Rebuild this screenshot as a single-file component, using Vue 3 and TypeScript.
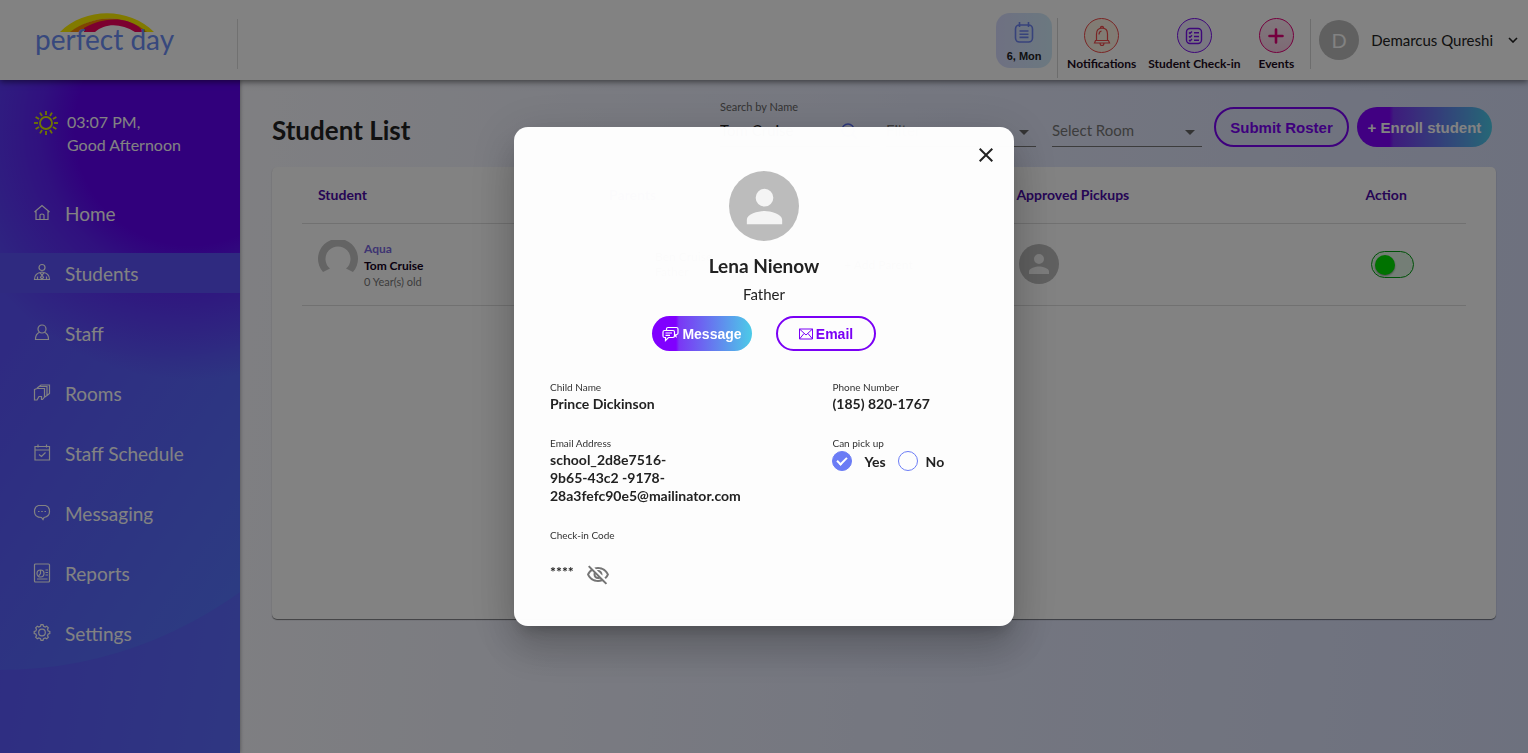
<script setup lang="ts">
import { ref } from 'vue'

interface NavItem {
  label: string
  icon: string
}

const navItems: NavItem[] = [
  { label: 'Home', icon: 'home' },
  { label: 'Students', icon: 'students' },
  { label: 'Staff', icon: 'staff' },
  { label: 'Rooms', icon: 'rooms' },
  { label: 'Staff Schedule', icon: 'schedule' },
  { label: 'Messaging', icon: 'messaging' },
  { label: 'Reports', icon: 'reports' },
  { label: 'Settings', icon: 'settings' },
]

const activeItem = ref('Students')
const search = ref('Tom Cruise')
const canPickUp = ref('yes')
const emailLines: string[] = ['school_2d8e7516-', '9b65-43c2 -9178-', '28a3fefc90e5@mailinator.com']
const sunRays: number[] = Array.from({ length: 12 }, (_, i) => i * 30)
</script>

<template>
  <div class="app">
    <header class="topbar">
      <a class="logo" href="#" aria-label="perfect day">
        <svg class="rainbow" viewBox="0 0 96 20" aria-hidden="true">
          <path d="M1 20C26-5 70-5 95 20H87C66 2 36 2 12 20Z" fill="#fdf000" />
          <path d="M11 20C35 2 67 2 88 20H80C62 6 42 6 22 20Z" fill="#f98a00" />
          <path d="M25 20V16C45 5 66 5 80 15L85 20H76C62 11 46 11 36 20Z" fill="#f3005c" />
        </svg>
        <span class="wordmark">perfect day</span>
      </a>
      <nav class="actions" aria-label="Quick actions">
        <button class="day" type="button">
          <svg width="22" height="24" viewBox="0 0 22 24" fill="none" stroke="#6d83f2" stroke-width="1.6" aria-hidden="true">
            <rect x="2.500" y="4" width="17" height="17" rx="4" />
            <path d="M6.500 1v5M15.500 1v5M6.500 10h9M6.500 13.200h9M6.500 16.400h9" />
          </svg>
          <span>6, Mon</span>
        </button>
        <span class="rule tall"></span>
        <a class="action" href="#">
          <span class="ring red">
            <svg width="18" height="22" viewBox="0 0 18 22" fill="none" stroke="#f04a4a" stroke-width="1.200" aria-hidden="true">
              <path d="M7.500 3.500V2.200Q9 .6 10.500 2.200V3.500M3.500 15.500V9Q3.500 3.200 9 3.200T14.500 9V15.500M2.500 15.500H15.500L16.500 18H1.500ZM7 18.200Q7.200 20.500 9 20.500T11 18.200M6 9.500Q6 6.500 8.500 6" />
            </svg>
          </span>
          <span>Notifications</span>
        </a>
        <a class="action checkin" href="#">
          <span class="ring violet">
            <svg width="18" height="18" viewBox="0 0 18 18" fill="none" stroke="#7b10f0" stroke-width="1.400" aria-hidden="true">
              <rect x="1.500" y="1.500" width="15" height="15" rx="3.500" />
              <path d="M4 5.500l1 1 2-2M4 9.300l1 1 2-2M4 13l1 1 2-2M9 5.800h5M9 9.500h5M9 13.200h5" />
            </svg>
          </span>
          <span>Student Check-in</span>
        </a>
        <a class="action events" href="#">
          <span class="ring pink">
            <svg width="16" height="16" viewBox="0 0 16 16" stroke="#e6007a" stroke-width="2.600" stroke-linecap="round" aria-hidden="true">
              <path d="M8 1.500v13M1.500 8h13" />
            </svg>
          </span>
          <span>Events</span>
        </a>
        <span class="rule"></span>
        <button class="profile" type="button">
          <span class="initial">D</span>
          <span class="user">Demarcus Qureshi</span>
          <svg width="10" height="6" viewBox="0 0 10 6" fill="none" stroke="#222" stroke-width="1.600" aria-hidden="true">
            <path d="M1 1l4 4 4-4" />
          </svg>
        </button>
      </nav>
    </header>

    <div class="body">
      <aside class="sidebar">
        <div class="greeting">
          <svg width="26" height="26" viewBox="0 0 26 26" fill="none" stroke="#dbe800" stroke-width="1.800" aria-hidden="true">
            <circle cx="13" cy="13" r="6" />
            <path v-for="angle in sunRays" :key="angle" d="M13 1v4" :transform="`rotate(${angle} 13 13)`" />
          </svg>
          <p>03:07 PM,<br />Good Afternoon</p>
        </div>
        <nav class="menu" aria-label="Main">
          <a v-for="item in navItems" :key="item.label" href="#" :class="{ active: item.label === activeItem }" @click.prevent="activeItem = item.label">
            <svg width="18" height="20" viewBox="0 0 18 20" fill="none" stroke="currentColor" stroke-width="1.200" aria-hidden="true">
              <g v-if="item.icon === 'home'">
                <path d="M1.500 9L9 2.500 16.500 9M3 8V16.500H15V8M7 16.500V12Q7 11 9 11T11 12V16.500" />
              </g>
              <g v-else-if="item.icon === 'students'">
                <circle cx="9" cy="4.500" r="3" />
                <path d="M1.500 16.500Q1.500 10 9 9Q16.500 10 16.500 16.500ZM7 10L9 12 11 10M9 12L7.500 14.500 9 16.300 10.500 14.500ZM4.500 16V13.500M13.500 16V13.500" />
              </g>
              <g v-else-if="item.icon === 'staff'">
                <circle cx="9" cy="6" r="4" />
                <path d="M6.500 9.300Q2.500 11 2.500 16.500H15.500Q15.500 11 11.500 9.300" />
              </g>
              <g v-else-if="item.icon === 'rooms'">
                <path d="M1.500 6.500L4 5.500H11.500V14L9.500 16.500H8.500V13.500H6L4 17H1.500ZM4 5.300L6 3.500H14V12.500L11.800 14M6.500 3.300L8 2H16.500V10.500L14 12.500" />
              </g>
              <g v-else-if="item.icon === 'schedule'">
                <path d="M2 3.500H16.500V17H2ZM2 7H16.500M5 1.500V4.500M13.500 1.500V4.500M6 11.500L8.500 13.500 12.500 9.500" />
              </g>
              <g v-else-if="item.icon === 'messaging'">
                <path d="M5.500 2.500H12.500Q16.500 3.500 16.500 8.500T11 14.500L10 16.500 8.500 14.500Q1.500 14.500 1.500 8.500 1.500 3.500 5.500 2.500ZM5 8.500H6.500M8.200 8.500H9.800M11.500 8.500H13" />
              </g>
              <g v-else-if="item.icon === 'reports'">
                <rect x="1.500" y="1" width="15" height="18" rx="1" />
                <circle cx="7.500" cy="10.500" r="3.500" />
                <path d="M7.500 7V10.500L5.500 13M12.500 7H15M12.500 9.500H15M12.500 12H15M4 16H14.500" />
              </g>
              <g v-else>
                <circle cx="9" cy="9.500" r="3.300" />
                <path d="M7.500 3.200L8 1.700H10L10.500 3.200L12.300 4L13.700 3.200L15.300 4.800L14.500 6.200L15.200 8L16.800 8.500V10.500L15.200 11L14.500 12.800L15.300 14.200L13.700 15.800L12.300 15L10.500 15.800L10 17.300H8L7.500 15.800L5.700 15L4.300 15.800L2.700 14.200L3.500 12.800L2.800 11L1.200 10.500V8.500L2.800 8L3.500 6.200L2.700 4.800L4.300 3.200L5.700 4Z" />
              </g>
            </svg>
            {{ item.label }}
          </a>
        </nav>
      </aside>

      <main class="content">
        <div class="toolbar">
          <h1>Student List</h1>
          <form class="filters" @submit.prevent>
            <div class="field">
              <label for="search">Search by Name</label>
              <input id="search" v-model="search" type="text" />
              <svg class="glass" width="18" height="18" viewBox="0 0 18 18" fill="none" stroke="#5a6cf0" stroke-width="1.600" aria-hidden="true">
                <circle cx="8" cy="8" r="6" /><path d="M12.500 12.500L17 17" />
              </svg>
            </div>
            <div class="field">
              <select aria-label="Filter"><option>Filter</option></select>
            </div>
            <div class="field">
              <select aria-label="Select Room"><option>Select Room</option></select>
            </div>
          </form>
          <div class="buttons">
            <button class="pill outline" type="button">Submit Roster</button>
            <button class="pill solid" type="button">+ Enroll student</button>
          </div>
        </div>

        <section class="card">
          <table>
            <thead>
              <tr>
                <th class="c-student">Student</th>
                <th class="c-parents">Parents</th>
                <th class="c-pickups">Approved Pickups</th>
                <th class="c-action">Action</th>
              </tr>
            </thead>
            <tbody>
              <tr>
                <td>
                  <div class="person">
                    <svg width="40" height="40" viewBox="0 0 40 40" aria-hidden="true">
                      <path d="M5 32A20 20 0 1 1 35 32L28 28.500A12.500 12.500 0 1 0 12 28.500Z" fill="#c4c4c4" />
                    </svg>
                    <div>
                      <p class="room">Aqua</p>
                      <p class="name">Tom Cruise</p>
                      <p class="age">0 Year(s) old</p>
                    </div>
                  </div>
                </td>
                <td>
                  <div class="parents">
                    <span class="avatar"><svg viewBox="0 0 24 24" aria-hidden="true"><path d="M12 12a4 4 0 1 0 0-8 4 4 0 0 0 0 8zm0 2c-2.700 0-8 1.300-8 4v2h16v-2c0-2.700-5.300-4-8-4z" fill="currentColor" /></svg></span>
                    <div><p class="name">Ben Cruise</p><p class="age">Father</p></div>
                    <span class="avatar second"></span>
                    <span>+ Add Parent</span>
                  </div>
                </td>
                <td>
                  <span class="avatar pickup"><svg viewBox="0 0 24 24" aria-hidden="true"><path d="M12 12a4 4 0 1 0 0-8 4 4 0 0 0 0 8zm0 2c-2.700 0-8 1.300-8 4v2h16v-2c0-2.700-5.300-4-8-4z" fill="currentColor" /></svg></span>
                </td>
                <td><input class="toggle" type="checkbox" role="switch" aria-label="Student active" /></td>
              </tr>
            </tbody>
          </table>
        </section>
      </main>
    </div>

    <div class="overlay">
      <section class="modal" role="dialog" aria-modal="true" aria-labelledby="contact-name">
        <button class="close" type="button" aria-label="Close">
          <svg width="14" height="14" viewBox="0 0 14 14" stroke="#222" stroke-width="2" aria-hidden="true"><path d="M.7.700l12.600 12.600M13.300.700L.7 13.300" /></svg>
        </button>
        <span class="avatar large"><svg viewBox="0 0 24 24" aria-hidden="true"><path d="M12 12a4 4 0 1 0 0-8 4 4 0 0 0 0 8zm0 2c-2.700 0-8 1.300-8 4v2h16v-2c0-2.700-5.300-4-8-4z" fill="currentColor" /></svg></span>
        <h2 id="contact-name">Lena Nienow</h2>
        <p class="relation">Father</p>
        <div class="contact">
          <button class="pill small solid" type="button">
            <svg width="17" height="16" viewBox="0 0 17 16" fill="none" stroke="currentColor" stroke-width="1.200" aria-hidden="true">
              <path d="M4.500 4V3Q4.500 1.500 6 1.500H14.500Q16 1.500 16 3V7Q16 8.500 14.500 8.500H14V10.500L12.500 9M2.500 4.500H11Q12.500 4.500 12.500 6V9.500Q12.500 11.500 11 11.500H6.500L3.500 14.500V11.500H2.500Q1 11.500 1 10V6Q1 4.500 2.500 4.500ZM3.500 7H10M3.500 9.300H8" />
            </svg>
            Message
          </button>
          <button class="pill small outline" type="button">
            <svg class="envelope" width="14" height="12" viewBox="0 0 14 12" fill="none" stroke="currentColor" aria-hidden="true">
              <path d="M.5 1H13.500V11H.500ZM.5 1L7 7 13.500 1M.500 11L5 5.500M13.500 11L9 5.500" />
            </svg>
            Email
          </button>
        </div>
        <div class="details">
          <div>
            <p class="label">Child Name</p>
            <p class="value">Prince Dickinson</p>
          </div>
          <div>
            <p class="label">Phone Number</p>
            <p class="value">(185) 820-1767</p>
          </div>
          <div>
            <p class="label">Email Address</p>
            <p class="value"><template v-for="line in emailLines" :key="line">{{ line }}<br /></template></p>
          </div>
          <fieldset>
            <legend class="label">Can pick up</legend>
            <div class="radios">
              <label class="yes"><input v-model="canPickUp" type="radio" name="pickup" value="yes" />Yes</label>
              <label class="no"><input v-model="canPickUp" type="radio" name="pickup" value="no" />No</label>
            </div>
          </fieldset>
          <div>
            <p class="label">Check-in Code</p>
            <div class="code">
              <span>****</span>
              <button type="button" aria-label="Show code">
                <svg width="24" height="24" viewBox="0 0 24 24" fill="#757575" aria-hidden="true">
                  <path d="M12 6c3.790 0 7.170 2.130 8.820 5.500-.59 1.220-1.420 2.270-2.410 3.120l1.410 1.410c1.390-1.230 2.490-2.770 3.180-4.530C21.270 7.110 17 4 12 4c-1.270 0-2.490.2-3.640.57l1.650 1.650C10.660 6.090 11.320 6 12 6zm-1.070 1.140L13 9.210c.57.25 1.030.71 1.280 1.280l2.070 2.070c.08-.34.14-.7.140-1.070C16.500 9.010 14.480 7 12 7c-.37 0-.72.050-1.070.14zM2.010 3.870l2.680 2.680C3.060 7.830 1.770 9.530 1 11.500 2.730 15.890 7 19 12 19c1.520 0 2.980-.29 4.320-.82l3.420 3.420 1.410-1.410L3.420 2.450 2.010 3.870zm7.500 7.500l2.610 2.610c-.04.010-.08.020-.12.020-1.380 0-2.500-1.120-2.500-2.500 0-.050.010-.08.010-.13zm-3.400-3.400l1.750 1.750c-.23.550-.36 1.150-.36 1.780 0 2.480 2.020 4.500 4.500 4.500.63 0 1.230-.13 1.770-.36l.98.98c-.88.240-1.800.38-2.750.38-3.790 0-7.170-2.130-8.820-5.500.7-1.430 1.720-2.610 2.930-3.530z" />
                </svg>
              </button>
            </div>
          </div>
        </div>
      </section>
    </div>
  </div>
</template>

<style>
body {
  margin: 0;
}
</style>

<style scoped>
.app {
  min-height: 100vh;
  display: flex;
  flex-direction: column;
  font-family: Lato, "Open Sans", sans-serif;
  color: #222;
}
p, h1, h2 {
  margin: 0;
}
a {
  color: inherit;
  text-decoration: none;
}
button {
  font-family: inherit;
  color: inherit;
  background: none;
  border: 0;
  padding: 0;
}
svg {
  flex-shrink: 0;
  display: block;
}

.topbar {
  height: 80px;
  display: flex;
  align-items: flex-start;
  justify-content: space-between;
  background: #fff;
  box-shadow: 0 2px 6px rgba(0, 0, 0, 0.5);
  position: relative;
  z-index: 1;
  box-sizing: border-box;
}
.logo {
  width: 202px;
  height: 50px;
  margin-top: 19px;
  padding-left: 35px;
  border-right: 1px solid #ddd;
  position: relative;
}
.rainbow {
  position: absolute;
  left: 59px;
  top: -7px;
  width: 96px;
  height: 20px;
}
.wordmark {
  position: relative;
  display: block;
  font-size: 28px;
  line-height: 40px;
  color: #6d8ef5;
}
.actions {
  display: flex;
  align-items: flex-start;
  padding-right: 10px;
}
.day {
  width: 56px;
  height: 55px;
  margin-top: 13px;
  padding-top: 3px;
  border-radius: 14px;
  background: linear-gradient(90deg, #d8dcff, #d3ecfb);
  display: flex;
  flex-direction: column;
  align-items: center;
  justify-content: center;
  gap: 4px;
  font: 700 11px/14px "Liberation Sans", sans-serif;
}
.rule {
  width: 1px;
  height: 50px;
  margin: 19px 8px 0 16px;
  background: #d6d6d6;
}
.rule.tall {
  height: 60px;
  margin: 18px 9px 0 5px;
}
.action {
  margin-top: 18px;
  display: flex;
  flex-direction: column;
  align-items: center;
  gap: 3px;
  font-size: 12px;
  line-height: 16px;
  font-weight: 700;
  color: #1c0a1c;
}
.checkin {
  margin-left: 12px;
}
.events {
  margin-left: 18px;
}
.ring {
  width: 35px;
  height: 35px;
  box-sizing: border-box;
  border: 1px solid;
  border-radius: 50%;
  display: grid;
  place-items: center;
}
.red {
  border-color: #f04a4a;
  background: #fdf3e4;
}
.violet {
  border-color: #7b10f0;
  background: #eeeafd;
}
.pink {
  border-color: #e6007a;
  background: linear-gradient(#fdeaf4, #f6cfe4);
}
.profile {
  display: flex;
  align-items: center;
  margin-top: 20px;
}
.initial {
  width: 40px;
  height: 40px;
  border-radius: 50%;
  background: #bdbdbd;
  color: #fff;
  font-size: 20px;
  line-height: 40px;
}
.user {
  margin: 0 15px 0 12px;
  font-size: 15px;
}

.body {
  flex: 1;
  display: flex;
}
.sidebar {
  width: 240px;
  flex-shrink: 0;
  position: relative;
  overflow: hidden;
  color: #fff;
  background: linear-gradient(100deg, #5c52ff, #5c6cff);
  box-shadow: 0 0 4px rgba(0, 0, 0, 0.4);
}
.sidebar::before {
  content: "";
  position: absolute;
  left: -408px;
  top: -226px;
  width: 816px;
  height: 816px;
  border-radius: 50%;
  background:
    radial-gradient(circle at 598px 276px, #6000f4 115px, rgba(96, 0, 244, 0.6) 150px, rgba(90, 60, 248, 0) 250px),
    linear-gradient(125deg, #5c54ff 55%, #567cff 90%);
}
.greeting {
  position: relative;
  display: flex;
  gap: 8px;
  padding: 30px 0 0 33px;
  font-size: 16px;
  line-height: 23px;
}
.menu {
  position: relative;
  display: flex;
  flex-direction: column;
  gap: 20px;
  margin-top: 37px;
}
.menu a {
  height: 40px;
  display: flex;
  align-items: center;
  gap: 14px;
  padding-left: 33px;
  font-size: 19px;
}
.menu a.active {
  background: #5c54fc;
}

.content {
  flex: 1;
  padding: 27px 32px 24px;
  background: linear-gradient(95deg, #fafaff, #e6eafc 50%, #d6ddf8);
}
.toolbar {
  height: 60px;
  display: flex;
  align-items: flex-start;
  padding-right: 4px;
}
h1 {
  flex: 1;
  font-size: 26px;
  line-height: 46px;
}
.filters {
  display: flex;
  gap: 16px;
  margin-right: 12px;
}
.field {
  position: relative;
  width: 150px;
  height: 39px;
  border-bottom: 1px solid #777;
}
.field label {
  position: absolute;
  top: -7px;
  left: 0;
  font-size: 11px;
  line-height: 14px;
  color: #666;
}
.field input,
.field select {
  width: 100%;
  height: 30px;
  margin-top: 8px;
  padding: 0;
  border: 0;
  background: none;
  font: 15px Lato, sans-serif;
  color: #222;
}
.field select {
  appearance: none;
  color: #777;
}
.field:has(select)::after {
  content: "";
  position: absolute;
  right: 7px;
  top: 23px;
  border: 5px solid transparent;
  border-top-color: #666;
  border-bottom: 0;
}
.glass {
  position: absolute;
  right: 12px;
  top: 15px;
}
.buttons {
  display: flex;
  gap: 8px;
}
.pill {
  min-width: 135px;
  height: 40px;
  box-sizing: border-box;
  display: flex;
  align-items: center;
  justify-content: center;
  border-radius: 20px;
  font: 700 15px "Liberation Sans", sans-serif;
  white-space: nowrap;
}
.solid {
  color: #fff;
  background: linear-gradient(90deg, #8000ff 24%, #7b36f5 27%, #4ccbe8);
}
.outline {
  color: #7a00f5;
  border: 2px solid #7a00f5;
}
.pill.small {
  min-width: 100px;
  height: 35px;
  gap: 3px;
  font-size: 14px;
}
.envelope {
  color: #7a00f5;
}

.card {
  min-height: 452px;
  box-sizing: border-box;
  padding: 0 30px;
  background: #fff;
  border-radius: 5px;
  box-shadow: 0 1px 1px rgba(0, 0, 0, 0.5);
}
table {
  width: 100%;
  table-layout: fixed;
  border-collapse: collapse;
}
th,
td {
  box-sizing: border-box;
  padding: 0 16px;
  border-bottom: 1px solid #ddd;
}
.c-student {
  width: 25%;
}
.c-parents {
  width: 35%;
}
.c-pickups {
  width: 30%;
}
.c-action {
  width: 10%;
}
th {
  height: 56px;
  text-align: left;
  font-size: 14px;
  font-weight: 700;
  color: #4b0aa8;
}
td {
  height: 82px;
}
.person,
.parents {
  display: flex;
  gap: 6px;
  align-items: center;
}
.person svg {
  align-self: flex-start;
}
.person p {
  font-size: 13px;
  line-height: 17px;
  font-weight: 700;
}
.person .room {
  font-size: 12px;
  color: #7b68e0;
}
.person .name {
  font-size: 12px;
  color: #12001c;
}
.person .age {
  font-size: 11px;
  line-height: 15px;
  font-weight: 400;
  color: #777;
}
.parents {
  font-size: 12px;
}
.second {
  margin-left: 80px;
}
.avatar {
  width: 40px;
  height: 40px;
  border-radius: 50%;
  background: #bcbcbc;
  color: #f4f4f4;
  display: grid;
  place-items: center;
}
.avatar svg {
  width: 30px;
  height: 30px;
}
.pickup {
  margin-left: 3px;
}
.toggle {
  appearance: none;
  display: block;
  width: 43px;
  height: 27px;
  margin: 0 5px;
  padding: 3px;
  box-sizing: border-box;
  border: 1px solid #00a010;
  border-radius: 14px;
  background: #e4f8e8;
}
.toggle::before {
  content: "";
  display: block;
  width: 20px;
  height: 20px;
  border-radius: 50%;
  background: #00e000;
  box-shadow: 0 1px 2px rgba(0, 0, 0, 0.4);
}
.toggle:checked::before {
  margin-left: auto;
}

.overlay {
  position: fixed;
  inset: 0;
  z-index: 2;
  display: flex;
  align-items: center;
  justify-content: center;
  background: rgba(0, 0, 0, 0.49);
}
.modal {
  position: relative;
  width: 500px;
  box-sizing: border-box;
  padding: 44px 36px 39px;
  display: flex;
  flex-direction: column;
  align-items: center;
  border-radius: 14px;
  background: rgba(255, 255, 255, 0.985);
  box-shadow: 0 11px 15px -7px rgba(0, 0, 0, 0.2), 0 24px 38px 3px rgba(0, 0, 0, 0.14), 0 9px 46px 8px rgba(0, 0, 0, 0.12);
}
.close {
  position: absolute;
  top: 21px;
  right: 21px;
}
.large {
  width: 70px;
  height: 70px;
}
.large svg {
  width: 53px;
  height: 53px;
}
h2 {
  margin-top: 13px;
  font-size: 19px;
  line-height: 24px;
}
.relation {
  margin-top: 6px;
  font-size: 15px;
  line-height: 20px;
}
.contact {
  display: flex;
  gap: 24px;
  margin-top: 12px;
}
.details {
  width: 100%;
  margin-top: 29px;
  display: grid;
  grid-template-columns: 66% 34%;
  row-gap: 23px;
}
.label {
  padding: 0 0 1px;
  font-size: 10px;
  line-height: 14px;
  color: #333;
}
.value {
  font-size: 14px;
  line-height: 18px;
  font-weight: 700;
}
fieldset {
  min-width: 0;
  margin: 0;
  padding: 0;
  border: 0;
}
.radios {
  display: flex;
  gap: 12px;
}
.radios label {
  display: flex;
  align-items: center;
  gap: 8px;
  font-size: 14px;
  font-weight: 700;
}
.radios .yes {
  gap: 12px;
}
.radios input {
  appearance: none;
  width: 20px;
  height: 20px;
  margin: 0;
  box-sizing: border-box;
  border: 1px solid #6b7cf5;
  border-radius: 50%;
  display: grid;
  place-items: center;
}
.radios input:checked {
  background: #6b7cf5;
}
.radios input:checked::before {
  content: "";
  width: 8px;
  height: 4px;
  margin-bottom: 3px;
  border: solid #fff;
  border-width: 0 0 2px 2px;
  transform: rotate(-45deg);
}
.code {
  display: flex;
  align-items: flex-start;
  gap: 12px;
  margin-top: 20px;
  font-size: 14px;
  font-weight: 700;
}
</style>
